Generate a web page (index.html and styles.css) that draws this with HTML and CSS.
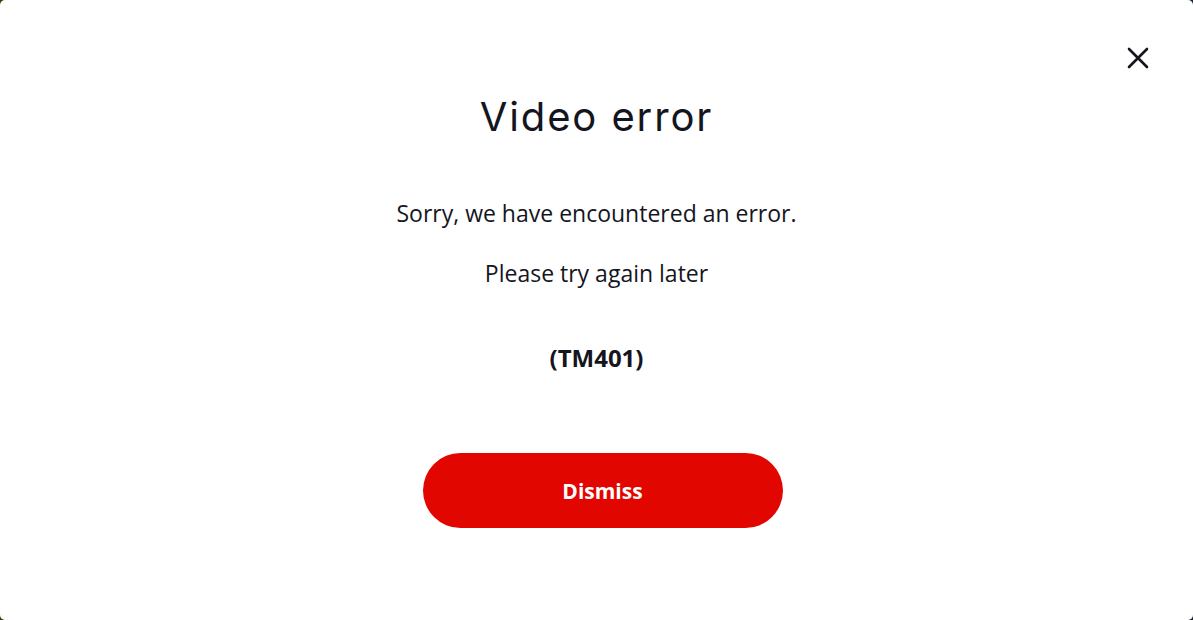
FILE: index.html
```html
<!DOCTYPE html>
<html lang="en">
<head>
<meta charset="utf-8">
<title>Video error</title>
<link rel="stylesheet" href="styles.css">
</head>
<body>
<div class="backdrop">
  <div class="modal" role="dialog" aria-labelledby="title">
    <button class="close" aria-label="Close">
      <svg width="24" height="24" viewBox="0 0 24 24"><path d="M3 3 L21 21 M21 3 L3 21" stroke="#15151e" stroke-width="2.6" stroke-linecap="round" fill="none"/></svg>
    </button>
    <h1 id="title" class="title">Video error</h1>
    <p class="msg">Sorry, we have encountered an error.</p>
    <p class="msg msg-second">Please try again later</p>
    <p class="code">(TM401)</p>
    <button class="dismiss">Dismiss</button>
  </div>
</div>
</body>
</html>
```
FILE: styles.css
```css
html, body {
  margin: 0;
  height: 100%;
}
body {
  background: linear-gradient(90deg, #3c3a0c 0%, #1b2333 100%);
  font-family: "Open Sans", "Liberation Sans", sans-serif;
  color: #15151e;
}
.backdrop {
  height: 100%;
  display: flex;
}
.modal {
  position: relative;
  flex: 1;
  background: #fff;
  border-radius: 5px;
  display: flex;
  flex-direction: column;
  align-items: center;
  padding-top: 90px;
}
.close {
  position: absolute;
  top: 46px;
  right: 43px;
  width: 24px;
  height: 24px;
  padding: 0;
  border: 0;
  background: none;
  display: flex;
}
.title {
  margin: 0;
  font-family: "Inter", sans-serif;
  font-weight: 400;
  font-size: 40px;
  letter-spacing: 1.9px;
  line-height: 54px;
  color: #15151e;
}
.msg {
  margin: 53px 0 0;
  font-size: 23px;
  line-height: 32px;
  letter-spacing: 0;
  color: #15151e;
}
.msg-second {
  margin-top: 28px;
}
.code {
  margin: 53px 0 0;
  font-size: 24px;
  font-weight: 700;
  line-height: 32px;
}
.dismiss {
  margin-top: 79px;
  margin-left: 12px;
  width: 360px;
  height: 75px;
  border: 0;
  border-radius: 38px;
  background: #e10600;
  color: #fff;
  font-family: "Open Sans", sans-serif;
  font-weight: 700;
  font-size: 21px;
}
```
